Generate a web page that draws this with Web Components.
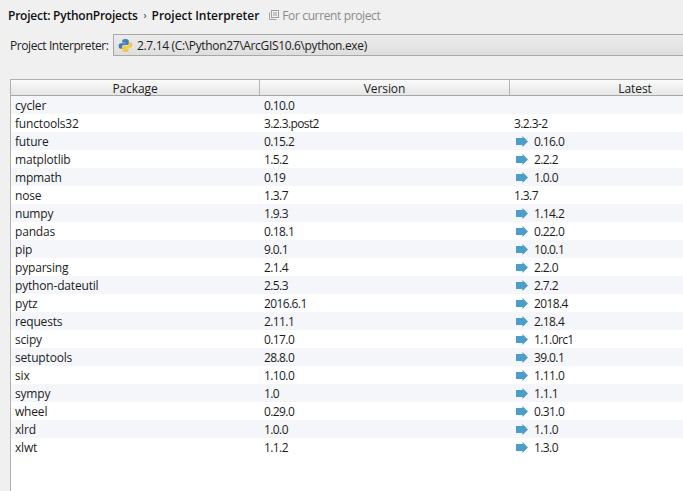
<!DOCTYPE html>
<html><head><meta charset="utf-8">
<style>
html,body{margin:0;padding:0;height:100%;overflow:hidden}
body{background:#f0f0f0;font:12px "Open Sans","Noto Sans",sans-serif;color:#1a1a1a}
</style></head><body>
<settings-page></settings-page>
<script>
class BreadcrumbBar extends HTMLElement{constructor(){super();this.attachShadow({mode:'open'}).innerHTML=`
<style>:host{display:flex;align-items:center;height:30px;padding-left:8px;font-size:12px;white-space:nowrap}
b{font-weight:600;color:#111}.a{letter-spacing:-.24px}.c{letter-spacing:-.04px}.sep{margin:0 5px 0 6px;font-size:10px;color:#333}
.cur{display:flex;align-items:center;color:#8a8a8a;margin-left:10px;letter-spacing:-.37px}
svg{margin-right:3px}</style>
<b class="a">Project: PythonProjects</b><span class="sep">›</span><b class="c">Project Interpreter</b>
<span class="cur"><svg width="10" height="10" viewBox="0 0 10 10" fill="none" stroke="#a0a0a0"><rect x="2.5" y=".5" width="7" height="7"/><path d="M.5 2.500v7h7M4 3h4M4 5h4"/></svg>For current project</span>`}}
customElements.define('breadcrumb-bar',BreadcrumbBar);

class InterpreterRow extends HTMLElement{constructor(){super();this.attachShadow({mode:'open'}).innerHTML=`
<style>:host{display:flex;align-items:center;height:22px;margin-top:4px;padding-left:10px;white-space:nowrap;letter-spacing:-.42px}
.l{width:103px;flex:none;color:#222}
.box{flex:1;box-sizing:border-box;height:22px;display:flex;align-items:center;gap:4px;padding-left:4px;background:linear-gradient(#ececec,#dedede);border:1px solid #a8a8a8;border-right:0;color:#1c1c1c;letter-spacing:-.34px}</style>
<span class="l">Project Interpreter:</span>
<div class="box"><svg width="15" height="15" viewBox="0 0 16 16"><path fill="#3f7fb5" d="M8 1C5 1 4.500 2 4.500 3.500V5H8.500v.7H3C1.500 5.700.7 7 .7 8.500c0 1.800.8 3 2.300 3H4.300V9.700c0-1.300 1-2.200 2.200-2.200h3.200c1 0 1.800-.8 1.800-1.900V3.200C11.500 1.800 10 1 8 1z"/><path fill="#f5c93e" d="M8 15c3 0 3.500-1 3.500-2.500V11H7.500v-.7H13c1.500 0 2.300-1.300 2.300-2.800 0-1.800-.8-3-2.300-3H11.700v1.800c0 1.300-1 2.200-2.200 2.200H6.300c-1 0-1.800.8-1.800 1.900v2.400C4.500 14.200 6 15 8 15z"/></svg><span>2.7.14 (C:\\Python27\\ArcGIS10.6\\python.exe)</span></div>`}}
customElements.define('interpreter-row',InterpreterRow);

class PackageRow extends HTMLElement{
 connectedCallback(){
  const n=this.getAttribute('name'),v=this.getAttribute('version'),l=this.getAttribute('latest')||'',up=this.hasAttribute('up');
  this.attachShadow({mode:'open'}).innerHTML=`
<style>:host{display:grid;grid-template-columns:249px 250px 250px;height:18px;align-items:center;white-space:nowrap;background:#fff;letter-spacing:-.18px;color:#1c1c1c}
:host([alt]){background:#f4f6fa}
span{padding-left:4px;display:flex;align-items:center;box-sizing:border-box;height:18px}
.v{letter-spacing:-.6px}
svg{margin:0 6px 0 2px;flex:none}</style>
<span>${n}</span><span class="v">${v}</span><span class="v">${up?`<svg width="12" height="11" viewBox="0 0 12 11"><path fill="#4b9ec9" d="M0 2h6.500V0L12 5.500 6.500 11V9H0z"/></svg>`:''}${l}</span>`;
 }}
customElements.define('package-row',PackageRow);

class PackageTable extends HTMLElement{constructor(){super();this.attachShadow({mode:'open'}).innerHTML=`
<style>:host{display:block;width:749px;margin-left:10px;margin-top:23px;border-left:1px solid #b0b0b0;border-top:1px solid #b0b0b0;background:#fff;height:420px}
.h{display:grid;grid-template-columns:249px 250px 250px;height:15px;background:linear-gradient(#fafafa,#e6e6e6);border-bottom:1px solid #a8a8a8;letter-spacing:-.1px;color:#222}
.h div{display:flex;align-items:center;justify-content:center;line-height:15px;padding-top:2px;box-sizing:border-box;height:15px;border-right:1px solid #b4b4b4}
.h div:last-child{border:0}</style>
<div class="h"><div>Package</div><div>Version</div><div>Latest</div></div><slot></slot>`}}
customElements.define('package-table',PackageTable);

class SettingsPage extends HTMLElement{constructor(){super();
 const rows=[['cycler','0.10.0','',0],['functools32','3.2.3.post2','3.2.3-2',0],['future','0.15.2','0.16.0',1],['matplotlib','1.5.2','2.2.2',1],['mpmath','0.19','1.0.0',1],['nose','1.3.7','1.3.7',0],['numpy','1.9.3','1.14.2',1],['pandas','0.18.1','0.22.0',1],['pip','9.0.1','10.0.1',1],['pyparsing','2.1.4','2.2.0',1],['python-dateutil','2.5.3','2.7.2',1],['pytz','2016.6.1','2018.4',1],['requests','2.11.1','2.18.4',1],['scipy','0.17.0','1.1.0rc1',1],['setuptools','28.8.0','39.0.1',1],['six','1.10.0','1.11.0',1],['sympy','1.0','1.1.1',1],['wheel','0.29.0','0.31.0',1],['xlrd','1.0.0','1.1.0',1],['xlwt','1.1.2','1.3.0',1]];
 this.attachShadow({mode:'open'}).innerHTML=`<style>:host{display:block;width:683px;height:491px;overflow:hidden}</style>
<breadcrumb-bar></breadcrumb-bar><interpreter-row></interpreter-row>
<package-table>${rows.map((r,i)=>`<package-row name="${r[0]}" version="${r[1]}" latest="${r[2]}" ${r[3]?'up':''} ${i%2==0?'alt':''}></package-row>`).join('')}</package-table>`}}
customElements.define('settings-page',SettingsPage);
</script></body></html>
